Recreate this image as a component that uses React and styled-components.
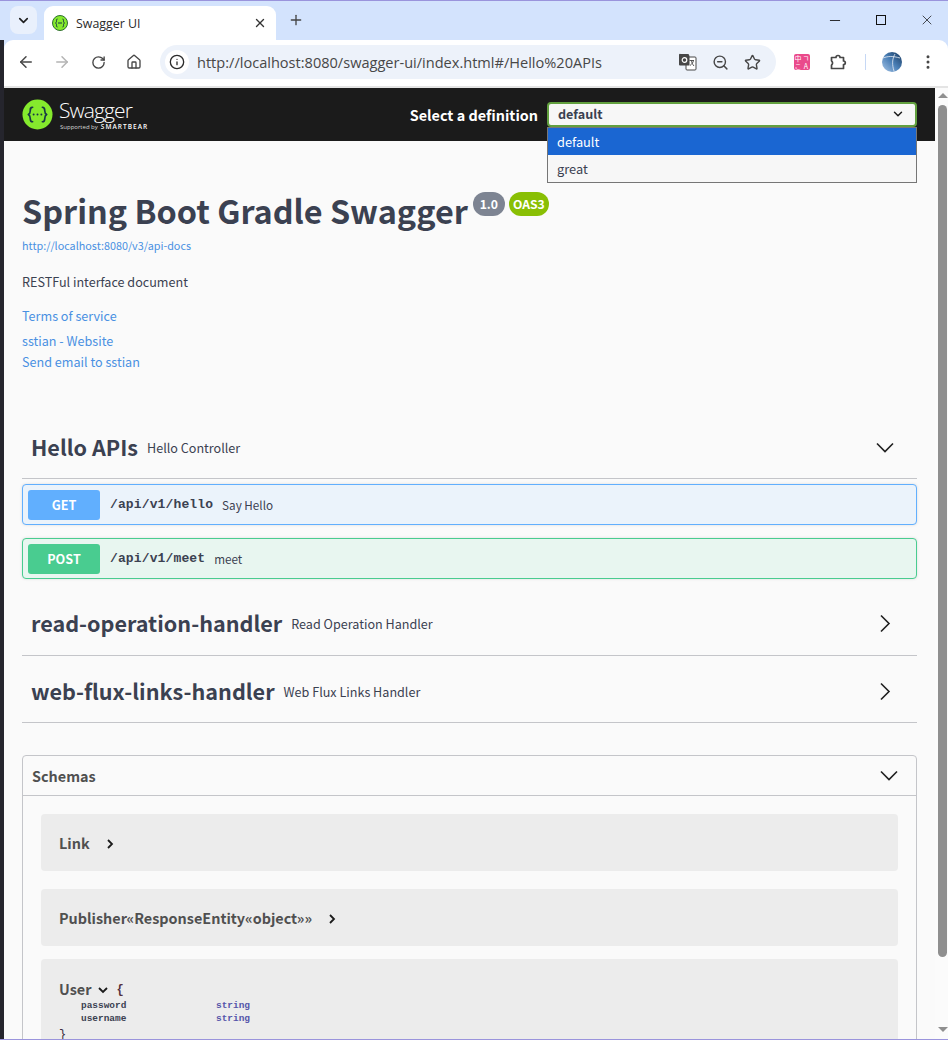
import React from 'react';
import styled, { createGlobalStyle } from 'styled-components';
import {
  ArrowLeft,
  ArrowRight,
  ChevronDown,
  EllipsisVertical,
  Info,
  House,
  Minus,
  Plus,
  RotateCw,
  Star,
  X,
  ZoomOut,
} from 'lucide-react';

const SANS = '"Noto Sans CJK SC", "Noto Sans", sans-serif';
const MONO = '"Liberation Mono", monospace';

const GlobalStyle = createGlobalStyle`
  html, body {
    margin: 0;
    padding: 0;
    overflow: hidden;
    background: #fafafa;
  }
  * {
    box-sizing: border-box;
  }
`;

const S = {
  Screen: styled.div`
    display: flex;
    flex-direction: column;
    width: 948px;
    height: 1040px;
    overflow: hidden;
    border-top: 1px solid #9a94dc;
    border-bottom: 1px solid #9a94dc;
    background: #d3e3fd;
    font-family: ${SANS};
  `,
  TabStrip: styled.div`
    display: flex;
    align-items: flex-start;
    flex: none;
    height: 39px;
    padding: 5px 0 0 10px;
    background: #d3e3fd;
  `,
  TabSearch: styled.button`
    display: flex;
    align-items: center;
    justify-content: center;
    width: 27px;
    height: 28px;
    padding: 0;
    border: 0;
    border-radius: 8px;
    background: #e9f0fc;
    color: #1f1f1f;
  `,
  Tab: styled.div`
    display: flex;
    align-items: center;
    width: 232px;
    height: 34px;
    margin-left: 7px;
    padding: 0 9px 0 8px;
    border-radius: 9px 9px 0 0;
    background: #fff;
  `,
  TabTitle: styled.span`
    flex: 1;
    margin-left: 8px;
    font-family: "Open Sans", sans-serif;
    font-size: 12.4px;
    color: #2a2a2a;
  `,
  NewTab: styled.div`
    display: flex;
    align-items: center;
    margin: 6px 0 0 12px;
    color: #444;
  `,
  WindowControls: styled.div`
    display: flex;
    align-items: center;
    gap: 30px;
    margin: 6px 13px 0 auto;
    color: #111;
  `,
  WinButton: styled.div`
    display: flex;
    align-items: center;
    justify-content: center;
    width: 16px;
    height: 16px;
  `,
  WinSquare: styled.div`
    width: 10px;
    height: 10px;
    border: 1px solid #111;
  `,
  Body: styled.div`
    display: flex;
    flex: 1;
    min-height: 0;
  `,
  Edge: styled.div`
    flex: none;
    width: 4px;
    background: #25252d;
  `,
  Window: styled.div`
    display: flex;
    flex-direction: column;
    flex: 1;
    min-width: 0;
  `,
  Toolbar: styled.div`
    display: flex;
    align-items: center;
    flex: none;
    height: 48px;
    padding: 0 0 2px 12px;
    border-radius: 9px 9px 0 0;
    border-bottom: 2px solid #e4e4e4;
    background: #fff;
  `,
  NavButton: styled.div`
    display: flex;
    align-items: center;
    justify-content: center;
    flex: none;
    width: 20px;
    margin-right: 16px;
    color: ${(p) => (p.$disabled ? '#b4b4b4' : '#474747')};
  `,
  Omnibox: styled.div`
    display: flex;
    align-items: center;
    flex: none;
    width: 616px;
    height: 34px;
    padding: 0 15px 0 5px;
    border-radius: 17px;
    background: #edf2fa;
  `,
  InfoChip: styled.div`
    display: flex;
    align-items: center;
    justify-content: center;
    flex: none;
    width: 24px;
    height: 24px;
    border-radius: 50%;
    background: #fff;
    color: #2b2b2b;
  `,
  Url: styled.span`
    flex: 1;
    margin-left: 8px;
    font-family: "Open Sans", sans-serif;
    font-size: 14.57px;
    color: #474747;
    white-space: nowrap;
  `,
  OmniIcons: styled.div`
    display: flex;
    align-items: center;
    gap: 15px;
    color: #474747;
  `,
  Extensions: styled.div`
    display: flex;
    align-items: center;
    flex: none;
    margin-left: 18px;
    color: #474747;
  `,
  PinkExt: styled.div`
    display: grid;
    grid-template-columns: 8px 8px;
    grid-template-rows: 8px 8px;
    width: 16px;
    height: 16px;
    margin-right: 19px;
    border-radius: 2px;
    background: #ea4a8b;
    color: #fff;
    font-size: 7px;
    line-height: 8px;
    text-align: center;
    overflow: hidden;
  `,
  Divider: styled.div`
    width: 1px;
    height: 16px;
    margin: 0 16px 0 18px;
    background: #c6d8f5;
  `,
  Menu: styled.div`
    display: flex;
    margin-left: 17px;
    color: #474747;
  `,
  Viewport: styled.div`
    display: flex;
    flex: 1;
    min-height: 0;
  `,
  Page: styled.div`
    flex: 1;
    min-width: 0;
    overflow: hidden;
    background: #fafafa;
    color: #3b4151;
  `,
  Scrollbar: styled.div`
    display: flex;
    flex-direction: column;
    align-items: center;
    flex: none;
    width: 13px;
    padding: 5px 0 0 2px;
    background: #fbfbfb;
  `,
  ScrollArrow: styled.div`
    flex: none;
    width: 0;
    height: 0;
    border-left: 5px solid transparent;
    border-right: 5px solid transparent;
    border-${(p) => (p.$down ? 'top' : 'bottom')}: 5px solid #8f8f8f;
  `,
  ScrollThumb: styled.div`
    flex: none;
    width: 9px;
    height: 852px;
    margin: 7px 0 70px;
    border-radius: 5px;
    background: #8f8f8f;
  `,
  Topbar: styled.div`
    display: flex;
    align-items: center;
    height: 53px;
    padding: 0 18px;
    background: #1b1b1b;
  `,
  LogoMark: styled.div`
    display: flex;
    align-items: center;
    flex: none;
  `,
  LogoText: styled.div`
    display: flex;
    flex-direction: column;
    margin-left: 6px;
    color: #fff;
  `,
  LogoName: styled.span`
    font-family: "Open Sans", sans-serif;
    font-size: 21px;
    font-weight: 300;
    line-height: 26px;
    letter-spacing: -0.9px;
  `,
  LogoSub: styled.span`
    display: flex;
    align-items: baseline;
    gap: 3px;
    margin: -1px 0 0 1px;
    font-family: "Open Sans", sans-serif;
    font-size: 6px;
    line-height: 9px;
    white-space: nowrap;
    color: #d8d8d8;
  `,
  LogoBear: styled.span`
    font-size: 6.5px;
    font-weight: 600;
    letter-spacing: 1.05px;
    color: #fff;
  `,
  SelectWrap: styled.div`
    display: flex;
    align-items: center;
    position: relative;
    height: 25px;
    margin-left: auto;
  `,
  SelectLabel: styled.span`
    margin-right: 9px;
    font-size: 14.4px;
    font-weight: 700;
    color: #fff;
  `,
  Select: styled.div`
    display: flex;
    align-items: center;
    justify-content: space-between;
    width: 370px;
    height: 25px;
    padding: 0 10px 2px 9px;
    border: 2px solid #62a03f;
    border-radius: 4px;
    background: #f7f7f7;
    font-size: 12.6px;
    font-weight: 700;
    color: #3b4151;
  `,
  Dropdown: styled.div`
    position: absolute;
    top: 100%;
    right: 0;
    width: 370px;
    border: 1px solid #767676;
    background: #f7f7f7;
    font-size: 12.8px;
  `,
  Option: styled.div`
    height: 27px;
    padding-left: 9px;
    line-height: 27px;
    background: ${(p) => (p.$active ? '#1a66d2' : 'transparent')};
    color: ${(p) => (p.$active ? '#fff' : '#3b4151')};
  `,
  Content: styled.div`
    padding: 0 18px;
  `,
  TitleRow: styled.div`
    display: flex;
    align-items: flex-start;
    margin-top: 47px;
  `,
  Title: styled.h1`
    margin: 0;
    font-size: 32.4px;
    font-weight: 700;
    line-height: 44px;
    color: #3b4151;
  `,
  Badge: styled.span`
    display: flex;
    align-items: center;
    justify-content: center;
    height: 24px;
    width: ${(p) => p.$width}px;
    margin: 4px 0 0 ${(p) => p.$gap}px;
    border-radius: 12px;
    background: ${(p) => p.$color};
    font-size: 12.2px;
    font-weight: 700;
    color: #fff;
  `,
  BaseUrl: styled.a`
    display: block;
    margin-top: 5px;
    font-size: 10.8px;
    line-height: 16px;
    color: #4990e2;
  `,
  Description: styled.p`
    margin: 19px 0 0;
    font-size: 12.6px;
    line-height: 20px;
    color: #3b4151;
  `,
  InfoLink: styled.a`
    display: block;
    margin-top: ${(p) => p.$top}px;
    font-size: 12.6px;
    line-height: 20px;
    color: #4990e2;
  `,
  TagRow: styled.div`
    display: flex;
    align-items: center;
    height: ${(p) => p.$height}px;
    margin-top: ${(p) => p.$top}px;
    padding: 0 22px 0 9px;
    border-bottom: 1px solid #c4c5c9;
  `,
  TagName: styled.span`
    margin-bottom: 3px;
    font-size: 21.6px;
    font-weight: 700;
    color: #3b4151;
  `,
  TagDesc: styled.span`
    flex: 1;
    margin: 0 0 2px 9px;
    font-size: 12.6px;
    color: #3b4151;
  `,
  Operation: styled.div`
    display: flex;
    align-items: center;
    height: 41px;
    margin-top: ${(p) => p.$top}px;
    padding: 0 5px;
    border: 1px solid ${(p) => p.$color};
    border-radius: 4px;
    background: ${(p) => p.$bg};
    box-shadow: 0 0 3px rgba(0, 0, 0, 0.12);
  `,
  Method: styled.span`
    flex: none;
    width: 72px;
    height: 30px;
    border-radius: 3px;
    background: ${(p) => p.$color};
    font-size: 12.6px;
    font-weight: 700;
    line-height: 30px;
    text-align: center;
    color: #fff;
  `,
  Path: styled.span`
    margin-left: 10px;
    font-family: ${MONO};
    font-size: 13px;
    font-weight: 700;
    letter-spacing: 0.13px;
    color: #3b4151;
  `,
  Summary: styled.span`
    margin-left: 9px;
    font-size: 11.7px;
    color: #3b4151;
  `,
  Schemas: styled.div`
    margin-top: 32px;
    border: 1px solid #c4c5c9;
    border-radius: 4px;
  `,
  SchemasHeader: styled.div`
    display: flex;
    align-items: center;
    justify-content: space-between;
    height: 40px;
    padding: 0 17px 0 9px;
    border-bottom: 1px solid #c4c5c9;
    font-size: 14.4px;
    font-weight: 700;
    color: #505050;
  `,
  SchemasBody: styled.div`
    padding: 0 18px;
  `,
  Model: styled.div`
    display: flex;
    align-items: center;
    gap: 14px;
    height: 57px;
    margin-top: ${(p) => p.$top}px;
    padding-left: 18px;
    border-radius: 4px;
    background: #ececec;
    font-size: 14.4px;
    font-weight: 700;
    color: #505050;
  `,
  ArrowSlot: styled.span`
    display: flex;
    margin: 3px 0 0 ${(p) => p.$left || 0}px;
  `,
  ModelOpen: styled.div`
    margin-top: 13px;
    padding: 19px 18px 20px;
    border-radius: 4px;
    background: #ececec;
  `,
  ModelHead: styled.div`
    display: flex;
    align-items: center;
    height: 21px;
    font-size: 14.4px;
    font-weight: 700;
    color: #505050;
  `,
  Brace: styled.span`
    margin: 3px 0 0 7px;
    font-family: ${MONO};
    font-size: 12px;
    color: #55303e;
  `,
  PropRow: styled.div`
    display: grid;
    grid-template-columns: 135px 1fr;
    height: 13px;
    padding-left: 22px;
    font-family: ${MONO};
    font-size: 9.45px;
    font-weight: 700;
    line-height: 13px;
    color: #3b4151;
  `,
  PropType: styled.span`
    color: #55a;
  `,
  CloseBrace: styled.div`
    margin-top: 3px;
    font-family: ${MONO};
    font-size: 12px;
    color: #3b2f3e;
  `,
};

function SwaggerMark({ size }) {
  return (
    <svg width={size} height={size} viewBox="0 0 32 32">
      <circle cx="16" cy="16" r="15.5" fill="#85ea2d" />
      <g fill="none" stroke="#173647" strokeWidth="1.7" strokeLinecap="round" strokeLinejoin="round">
        <path d="M11 8.5c-2.5 0-2.5 1.5-2.5 3.5s0 3-2 4c2 1 2 2 2 4s0 3.5 2.5 3.5" />
        <path d="M21 8.5c2.5 0 2.5 1.5 2.5 3.5s0 3 2 4c-2 1-2 2-2 4s0 3.5-2.5 3.5" />
      </g>
      <g fill="#173647">
        <circle cx="12" cy="16" r="1" />
        <circle cx="16" cy="16" r="1" />
        <circle cx="20" cy="16" r="1" />
      </g>
    </svg>
  );
}

function TabFavicon() {
  return (
    <svg width="16" height="16" viewBox="0 0 16 16">
      <circle cx="8" cy="8" r="7.5" fill="#85ea2d" stroke="#2f6f2f" strokeWidth="1" />
      <path
        d="M5.5 4C4.2 4 4.5 5.5 4.5 6.5S4 7.700 3.500 8c.5.3 1 .5 1 1.500S4.200 12 5.500 12M10.500 4c1.300 0 1 1.500 1 2.500s.5 1.200 1 1.500c-.5.300-1 .5-1 1.500s.3 2.500-1 2.500M6 8h4"
        fill="none"
        stroke="#173647"
        strokeWidth="1"
      />
    </svg>
  );
}

function TranslateIcon() {
  return (
    <svg width="18" height="18" viewBox="0 0 18 18">
      <rect x="7" y="4" width="10" height="13" rx="1" fill="#fff" stroke="#474747" strokeWidth="1" />
      <path d="M1.5 1h8l1 2v9.500H1a1 1 0 0 1-1-1V2a1 1 0 0 1 1.500-1z" fill="#474747" />
      <circle cx="5.5" cy="7" r="2.3" fill="none" stroke="#fff" strokeWidth="1.2" />
      <path d="M10.500 7.500H15M12.500 7.500c.2 2.500 1.200 4 2.500 5.500M14.500 7.500c-.4 2-1.500 3.500-3.500 5" fill="none" stroke="#474747" strokeWidth="0.9" />
    </svg>
  );
}

function ExtensionIcon() {
  return (
    <svg width="18" height="18" viewBox="0 0 18 18" fill="none" stroke="#474747" strokeWidth="1.7" strokeLinejoin="round">
      <path d="M2.500 4.500H7a2 2 0 0 1 4 0h3.500v3.500a1.800 1.800 0 0 1 0 3.600V15.500H2.500v-3.300a2.800 2.800 0 0 0 0-4.400z" />
    </svg>
  );
}

function AvatarIcon() {
  return (
    <svg width="20" height="20" viewBox="0 0 20 20">
      <defs>
        <linearGradient id="globe" x1="0" y1="1" x2="1" y2="0">
          <stop offset="0" stopColor="#a9c7e8" />
          <stop offset="0.5" stopColor="#4a7fb6" />
          <stop offset="1" stopColor="#17375c" />
        </linearGradient>
      </defs>
      <circle cx="10" cy="10" r="10" fill="url(#globe)" />
      <path d="M1 6c5-2 10-2 17 0M13 2c-3 5-3 11-1 17" fill="none" stroke="#e8eef5" strokeWidth="0.8" />
    </svg>
  );
}

function SwaggerArrow({ dir }) {
  const d = dir === 'down' ? 'M2 5.5l8 8 8-8' : 'M6 1.5l8 8-8 8';
  return (
    <svg width="20" height="20" viewBox="0 0 20 20" fill="none" stroke="#1f1f1f" strokeWidth="1.6">
      <path d={d} />
    </svg>
  );
}

function SmallArrow({ dir }) {
  const d = dir === 'down' ? 'M2 4l4 4 4-4' : 'M4 2l4 4-4 4';
  return (
    <svg width="12" height="12" viewBox="0 0 12 12" fill="none" stroke="#1b1b1b" strokeWidth="1.8">
      <path d={d} />
    </svg>
  );
}

function Chrome() {
  return (
    <S.Toolbar>
      <S.NavButton><ArrowLeft size={18} /></S.NavButton>
      <S.NavButton $disabled><ArrowRight size={18} /></S.NavButton>
      <S.NavButton><RotateCw size={15} strokeWidth={2.2} /></S.NavButton>
      <S.NavButton><House size={16} /></S.NavButton>
      <S.Omnibox>
        <S.InfoChip><Info size={16} /></S.InfoChip>
        <S.Url>http://localhost:8080/swagger-ui/index.html#/Hello%20APIs</S.Url>
        <S.OmniIcons>
          <TranslateIcon />
          <ZoomOut size={17} />
          <Star size={17} />
        </S.OmniIcons>
      </S.Omnibox>
      <S.Extensions>
        <S.PinkExt>
          <span>中</span>
          <span>ㄱ</span>
          <span>こ</span>
          <span>A</span>
        </S.PinkExt>
        <ExtensionIcon />
        <S.Divider />
        <AvatarIcon />
        <S.Menu><EllipsisVertical size={18} /></S.Menu>
      </S.Extensions>
    </S.Toolbar>
  );
}

function Topbar() {
  return (
    <S.Topbar>
      <S.LogoMark><SwaggerMark size={31} /></S.LogoMark>
      <S.LogoText>
        <S.LogoName>Swagger</S.LogoName>
        <S.LogoSub>
          Supported by <S.LogoBear>SMARTBEAR</S.LogoBear>
        </S.LogoSub>
      </S.LogoText>
      <S.SelectWrap>
        <S.SelectLabel>Select a definition</S.SelectLabel>
        <S.Select>
          default
          <ChevronDown size={14} color="#1b1b1b" strokeWidth={2.5} />
        </S.Select>
        <S.Dropdown>
          <S.Option $active>default</S.Option>
          <S.Option>great</S.Option>
        </S.Dropdown>
      </S.SelectWrap>
    </S.Topbar>
  );
}

function Tag({ name, desc, top, height, open }) {
  return (
    <S.TagRow $top={top} $height={height}>
      <S.TagName>{name}</S.TagName>
      <S.TagDesc>{desc}</S.TagDesc>
      <SwaggerArrow dir={open ? 'down' : 'right'} />
    </S.TagRow>
  );
}

function Operation({ method, path, summary, color, bg, top }) {
  return (
    <S.Operation $color={color} $bg={bg} $top={top}>
      <S.Method $color={color}>{method}</S.Method>
      <S.Path>{path}</S.Path>
      <S.Summary>{summary}</S.Summary>
    </S.Operation>
  );
}

export default function App() {
  return (
    <>
      <GlobalStyle />
      <S.Screen>
        <S.TabStrip>
          <S.TabSearch><ChevronDown size={15} strokeWidth={2.6} /></S.TabSearch>
          <S.Tab>
            <TabFavicon />
            <S.TabTitle>Swagger UI</S.TabTitle>
            <X size={14} strokeWidth={2.4} color="#333" />
          </S.Tab>
          <S.NewTab><Plus size={16} strokeWidth={2} /></S.NewTab>
          <S.WindowControls>
            <S.WinButton><Minus size={17} strokeWidth={1.3} /></S.WinButton>
            <S.WinButton><S.WinSquare /></S.WinButton>
            <S.WinButton><X size={20} strokeWidth={1.1} /></S.WinButton>
          </S.WindowControls>
        </S.TabStrip>
        <S.Body>
          <S.Edge />
          <S.Window>
            <Chrome />
            <S.Viewport>
              <S.Page>
                <Topbar />
                <S.Content>
                  <S.TitleRow>
                    <S.Title>Spring Boot Gradle Swagger</S.Title>
                    <S.Badge $color="#7d8492" $width={32} $gap={5}>1.0</S.Badge>
                    <S.Badge $color="#89bf04" $width={40} $gap={4}>OAS3</S.Badge>
                  </S.TitleRow>
                  <S.BaseUrl>http://localhost:8080/v3/api-docs</S.BaseUrl>
                  <S.Description>RESTFul interface document</S.Description>
                  <S.InfoLink $top={14}>Terms of service</S.InfoLink>
                  <S.InfoLink $top={5}>sstian - Website</S.InfoLink>
                  <S.InfoLink $top={1}>Send email to sstian</S.InfoLink>

                  <Tag name="Hello APIs" desc="Hello Controller" top={46} height={61} open />
                  <Operation method="GET" path="/api/v1/hello" summary="Say Hello" color="#61affe" bg="#ebf3fb" top={5} />
                  <Operation method="POST" path="/api/v1/meet" summary="meet" color="#49cc90" bg="#e8f6f0" top={13} />
                  <Tag name="read-operation-handler" desc="Read Operation Handler" top={14} height={63} />
                  <Tag name="web-flux-links-handler" desc="Web Flux Links Handler" top={6} height={61} />

                  <S.Schemas>
                    <S.SchemasHeader>
                      Schemas
                      <SwaggerArrow dir="down" />
                    </S.SchemasHeader>
                    <S.SchemasBody>
                      <S.Model $top={18}>
                        Link
                        <S.ArrowSlot><SmallArrow dir="right" /></S.ArrowSlot>
                      </S.Model>
                      <S.Model $top={18}>
                        Publisher«ResponseEntity«object»»
                        <S.ArrowSlot><SmallArrow dir="right" /></S.ArrowSlot>
                      </S.Model>
                      <S.ModelOpen>
                        <S.ModelHead>
                          User
                          <S.ArrowSlot $left={6}><SmallArrow dir="down" /></S.ArrowSlot>
                          <S.Brace>{'{'}</S.Brace>
                        </S.ModelHead>
                        <S.PropRow>
                          <span>password</span>
                          <S.PropType>string</S.PropType>
                        </S.PropRow>
                        <S.PropRow>
                          <span>username</span>
                          <S.PropType>string</S.PropType>
                        </S.PropRow>
                        <S.CloseBrace>{'}'}</S.CloseBrace>
                      </S.ModelOpen>
                    </S.SchemasBody>
                  </S.Schemas>
                </S.Content>
              </S.Page>
              <S.Scrollbar>
                <S.ScrollArrow />
                <S.ScrollThumb />
                <S.ScrollArrow $down />
              </S.Scrollbar>
            </S.Viewport>
          </S.Window>
        </S.Body>
      </S.Screen>
    </>
  );
}
